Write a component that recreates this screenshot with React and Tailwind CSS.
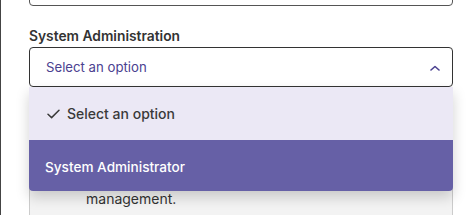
import React from "react";

const ChevronUp = () => (
  <svg width="10" height="6" viewBox="0 0 10 6" fill="none">
    <polyline points="1,5 5,1.5 9,5" stroke="#4b4190" strokeWidth="1.6" strokeLinecap="round" strokeLinejoin="round" />
  </svg>
);

const Check = () => (
  <svg width="13" height="10" viewBox="0 0 13 10" fill="none">
    <polyline points="1,5.2 4.6,8.6 12,1.2" stroke="#3a3a3a" strokeWidth="1.5" strokeLinecap="round" strokeLinejoin="round" />
  </svg>
);

export default function App() {
  return (
    <div
      className="w-[471px] h-[215px] overflow-hidden bg-white border-l border-[#444]"
      style={{ fontFamily: "Inter, 'Noto Sans', sans-serif" }}
    >
      <div className="pl-[28px] pr-[18px]">
        <div className="-mt-[34px] h-[40px] border border-[#555] rounded-[4px]" />

        <div className="mt-[20px] mb-[1px] text-[13.8px] font-semibold text-[#333] leading-[20px]">
          System Administration
        </div>

        <div className="relative">
          <div className="h-[40px] border border-[#333] rounded-[4px] flex items-center justify-between pl-[16px] pr-[12px] pt-[1px]">
            <span className="text-[13.2px] text-[#4b4190]">Select an option</span>
            <ChevronUp />
          </div>

          <div className="absolute left-0 right-0 top-[40px] z-10 rounded-b-[4px] overflow-hidden shadow-[0_6px_14px_rgba(0,0,0,0.18)]">
            <div className="h-[53px] bg-[#ebe8f5] flex items-center pl-[18px] gap-[7px]">
              <Check />
              <span className="text-[14px] font-medium text-[#3a3a3a]">Select an option</span>
            </div>
            <div className="h-[51px] bg-[#6660a6] flex items-center pl-[16px] pt-[3px]">
              <span className="text-[13.6px] font-medium text-white">System Administrator</span>
            </div>
          </div>

          <div className="mt-[8px] h-[140px] border border-[#ccc] rounded-[4px] bg-[#f3f3f3] pt-[93px] pl-[56px] text-[14px] text-[#333] leading-[20px]">
            <div>management.</div>
          </div>
        </div>
      </div>
    </div>
  );
}
